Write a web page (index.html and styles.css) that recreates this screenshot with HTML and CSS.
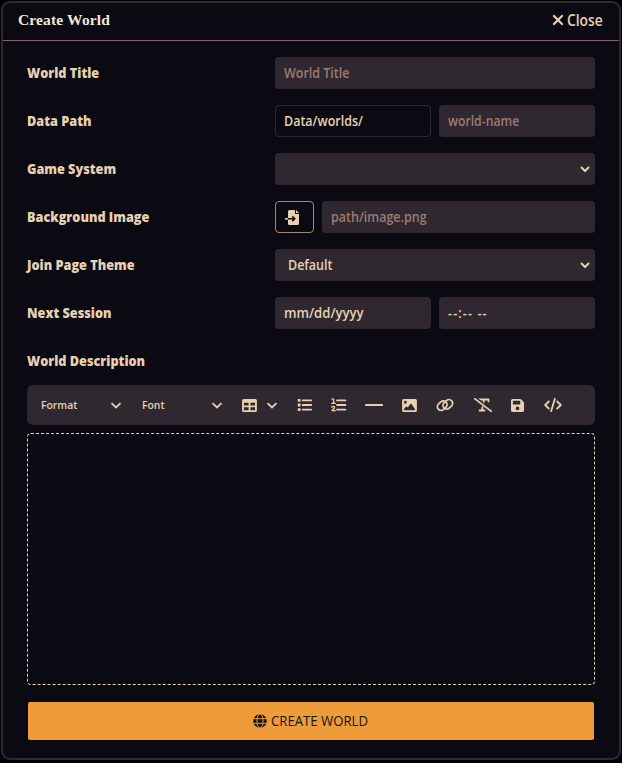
FILE: index.html
```html
<!DOCTYPE html>
<html lang="en">
<head>
<meta charset="utf-8">
<title>Create World</title>
<link rel="stylesheet" href="styles.css">
</head>
<body>
<div class="window">
  <header class="window-header">
    <h1 class="window-title">Create World</h1>
    <a class="close"><svg class="close-icon" viewBox="0 0 12 12"><path d="M2 2l8 8M10 2l-8 8"/></svg><span>Close</span></a>
  </header>
  <form class="content">
    <div class="row"><label>World Title</label><div class="fields"><div class="field placeholder"><span>World Title</span></div></div></div>
    <div class="row"><label>Data Path</label><div class="fields"><div class="field outlined"><span>Data/worlds/</span></div><div class="field placeholder"><span class="p-name">world-name</span></div></div></div>
    <div class="row"><label>Game System</label><div class="fields"><div class="field select"><span></span><svg class="caret" viewBox="0 0 10 6"><path d="M1 1l4 4 4-4"/></svg></div></div></div>
    <div class="row"><label>Background Image</label><div class="fields"><button type="button" class="picker"><svg viewBox="0 0 15 15"><path class="fill" d="M4.500 0H10v4h4v9.200c0 1-.6 1.800-1.600 1.800H4.500C3.500 15 3 14.200 3 13.200V1.800C3 .7 3.500 0 4.500 0zM11 0l3 3h-3z"/><path class="arrow" d="M3 8.800h6.500M7.200 6.300l2.600 2.500-2.600 2.500"/><path class="tail" d="M0 8.800h3"/></svg></button><div class="field placeholder"><span>path/image.png</span></div></div></div>
    <div class="row"><label>Join Page Theme</label><div class="fields"><div class="field select"><span>Default</span><svg class="caret" viewBox="0 0 10 6"><path d="M1 1l4 4 4-4"/></svg></div></div></div>
    <div class="row"><label>Next Session</label><div class="fields"><div class="field"><span class="p-date">mm/dd/yyyy</span></div><div class="field"><span class="p-time">--:-- --</span></div></div></div>
    <div class="row"><label>World Description</label></div>
    <div class="toolbar">
      <div class="dropdown format"><span>Format</span><svg viewBox="0 0 12 7"><path d="M1.500 1.200L6 5.500l4.500-4.300"/></svg></div>
      <div class="dropdown font"><span>Font</span><svg viewBox="0 0 12 7"><path d="M1.500 1.200L6 5.500l4.500-4.300"/></svg></div>
      <div class="dropdown table"><svg class="table-icon" viewBox="0 0 512 448"><path fill-rule="evenodd" d="M64 0h384q64 0 64 64v320q0 64-64 64H64q-64 0-64-64V64Q0 0 64 0zM64 128v96h160v-96zM288 128v96h160v-96zM64 288v96h160v-96zM288 288v96h160v-96z"/></svg><svg viewBox="0 0 12 7"><path d="M1.500 1.200L6 5.500l4.500-4.300"/></svg></div>
      <svg class="tool bullets" viewBox="0 0 16 14"><path class="fill" d="M.8 1h2.700v2.800H.8zM.8 5.600h2.700v2.800H.8zM.8 10.200h2.700V13H.8z"/><path class="line" d="M5.600 2.400h8.600M5.600 7h8.600M5.600 11.600h8.600"/></svg>
      <svg class="tool numbers" viewBox="0 0 16 14"><path class="digit" d="M1 1.200h1.600v4M.7 5.300h3.600M.8 9.200c.8-1.300 3-1 2.700.4-.2 1-1.500 1.800-2.500 3h3.300"/><path class="line" d="M6 2.400h8.400M6 7h8.400M6 11.600h8.400"/></svg>
      <svg class="tool rule" viewBox="0 0 18 14"><path class="line" d="M.8 7h16.400"/></svg>
      <svg class="tool image" viewBox="0 0 512 448"><path class="fill" fill-rule="evenodd" d="M64 0h384q64 0 64 64v320q0 64-64 64H64q-64 0-64-64V64Q0 0 64 0zM324 170q-20-20-40 0l-87 127-27-33q-20-15-38 0l-64 80q-14 34 20 40h336q34-6 20-40zM112 64a48 48 0 1 0 0 96 48 48 0 1 0 0-96z"/></svg>
      <svg class="tool link" viewBox="0 0 18 14"><rect class="outline" x="1" y="4" width="10.400" height="7.400" rx="3.700" transform="rotate(-42 6.200 7.700)"/><rect class="outline" x="6.600" y="2.600" width="10.400" height="7.400" rx="3.700" transform="rotate(-42 11.800 6.300)"/></svg>
      <svg class="tool clear" viewBox="0 0 18 14"><path class="line" d="M5 3.500V1.500h9.500v2M10 1.500L8 12.500M5.500 12.500h5"/><path class="cut" d="M.8 0L18 13.500"/><path class="slash" d="M.5.5l17 13"/></svg>
      <svg class="tool save" viewBox="0 0 448 448"><path class="fill" fill-rule="evenodd" d="M64 0h246q26 0 45 19l74 74q19 19 19 45v246q0 64-64 64H64q-64 0-64-64V64Q0 0 64 0zM64 96v64q0 32 32 32h192q32 0 32-32V96q0-32-32-32H96q-32 0-32 32zM224 256a64 64 0 1 0 0 128 64 64 0 1 0 0-128z"/></svg>
      <svg class="tool code" viewBox="0 0 18 14"><path class="line" d="M4.800 3.500L1.200 7l3.600 3.500M13.200 3.500L16.800 7l-3.600 3.500M10.800.9L7.200 13.100"/></svg>
    </div>
    <div class="editor"></div>
    <button type="button" class="submit"><svg viewBox="0 0 16 16"><circle cx="8" cy="8" r="7.800"/><ellipse class="grid" cx="8" cy="8" rx="3.500" ry="8"/><path class="grid" d="M.2 5.300h15.600M.2 10.700h15.600"/></svg><span>CREATE WORLD</span></button>
  </form>
</div>
</body>
</html>
```
FILE: styles.css
```css
* { box-sizing: border-box; }
body { margin: 0; padding: 1px; height: 763px; background: #000; overflow: hidden; color: #e7d1b1; font-family: "Open Sans", "Noto Sans", sans-serif; font-size: 13.500px; }
svg { display: block; flex: none; fill: #e7d1b1; }
span, label { white-space: nowrap; transform-origin: left center; }
.window { width: 620px; height: 759px; border: 2px solid #302831; border-radius: 9px; background: #0b0a13; }
.window-header { height: 38px; border-bottom: 1px solid #7d6372; padding: 0 12px 3px 15px; display: flex; align-items: center; justify-content: space-between; }
.window-title { margin: 0; font: bold 15.500px "Liberation Serif", serif; letter-spacing: .15px; color: #f0e6d8; }
.close { display: flex; align-items: center; gap: 3px; font-size: 15.500px; font-weight: 600; }
.close span { transform: scaleX(.89); }
.close-icon { width: 12px; height: 12px; fill: none; stroke: #e7d1b1; stroke-width: 2.200; stroke-linecap: round; }
.content { padding: 16px 24px 0; }
.row { height: 32px; margin-bottom: 16px; display: flex; align-items: center; }
.row label { width: 248px; flex: none; font-size: 14.500px; font-weight: 800; padding-bottom: 1px; transform: scaleX(.875); }
.fields { flex: 1; display: flex; gap: 8px; }
.field { flex: 1 1 0; height: 32px; border-radius: 4px; background: #302831; padding: 0 9px 1px; display: flex; align-items: center; font-weight: 600; }
.field span { transform: scaleX(.925); }
.field .p-name { transform: scaleX(.905); }
.field .p-date { transform: scaleX(.97); }
.field .p-time { letter-spacing: 1.200px; }
.placeholder { color: #9a7c70; }
.outlined { background: transparent; border: 1px solid #302831; padding: 0 8px 1px; }
.select { justify-content: space-between; padding: 0 5px 0 13px; }
.select span { padding-bottom: 1px; }
.caret { width: 10px; height: 6px; }
.caret path { fill: none; stroke: #e7d1b1; stroke-width: 2; }
.picker { width: 39px; height: 32px; flex: none; border: 1px solid #a58873; border-radius: 4px; background: transparent; padding: 0 0 0 9px; display: flex; align-items: center; }
.picker svg { width: 15px; height: 15px; }
.arrow { fill: none; stroke: #0b0a13; stroke-width: 1.500; }
.tail { stroke: #e7d1b1; stroke-width: 1.500; }
.toolbar { height: 40px; margin-top: -8px; border-radius: 6px; background: #302831; display: flex; align-items: center; padding-left: 14px; }
.dropdown { display: flex; align-items: center; justify-content: space-between; font-size: 11.500px; font-weight: 600; }
.dropdown span { transform: scaleX(.9); padding-bottom: 1px; }
.dropdown svg { width: 12px; height: 7px; }
.dropdown svg path { fill: none; stroke: #e7d1b1; stroke-width: 1.800; }
.dropdown .table-icon { width: 15px; height: 13px; }
.dropdown .table-icon path { fill: #e7d1b1; stroke: none; }
.format { width: 81px; margin-right: 20px; }
.font { width: 81px; margin-right: 19px; }
.table { width: 36px; margin-right: 19px; }
.tool { height: 14px; }
.bullets, .numbers { width: 16px; margin-right: 18px; }
.rule { width: 18px; margin-right: 19px; }
.image { width: 15px; height: 13px; margin-right: 19px; }
.link { width: 18px; margin-right: 20px; }
.clear { width: 18px; margin-right: 19px; }
.save { width: 13px; height: 13px; margin-right: 20px; }
.code { width: 18px; }
.line, .digit, .outline, .slash { fill: none; stroke: #e7d1b1; stroke-width: 1.800; stroke-linecap: round; stroke-linejoin: round; }
.digit { stroke-width: 1.300; }
.slash { stroke-width: 1.600; }
.cut { stroke: #302831; stroke-width: 3.500; }
.editor { height: 252px; margin-top: 8px; border: 1px dashed #e7d1b1; border-radius: 4px; }
.submit { width: 566px; height: 38px; margin: 17px 1px 0; border: 0; border-radius: 2px; background: #ee9b3a; color: #19130f; padding: 0 0 1px 6px; font: 14px "Open Sans", sans-serif; display: flex; align-items: center; justify-content: center; gap: 4px; }
.submit span { transform: scaleX(.94); }
.submit svg { width: 14px; height: 14px; fill: #19130f; }
.submit .grid { fill: none; stroke: #ee9b3a; stroke-width: 1.100; }
```
